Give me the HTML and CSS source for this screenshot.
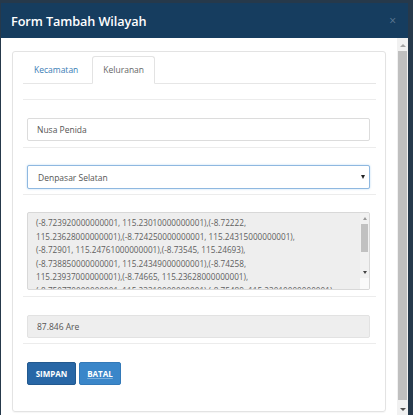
FILE: index.html
```html
<!DOCTYPE html>
<html>
<head>
<meta charset="utf-8">
<link rel="stylesheet" href="styles.css">
</head>
<body>
<div class="modal">
  <div class="modal-header">
    <h4 class="modal-title">Form Tambah Wilayah</h4>
    <span class="close">×</span>
  </div>
  <div class="modal-main">
    <div class="modal-body">
      <div class="panel">
        <ul class="tabs">
          <li class="tab"><a>Kecamatan</a></li>
          <li class="tab active"><a>Keluranan</a></li>
        </ul>
        <div class="sep"></div>
        <div class="group">
          <input class="field" type="text" value="Nusa Penida">
        </div>
        <div class="group group-tight">
          <div class="field select"><span>Denpasar Selatan</span><span class="caret"></span></div>
        </div>
        <div class="group group-ta">
          <div class="ta-box">
            <textarea class="ta" wrap="off" readonly>(-8.723920000000001, 115.23010000000001),(-8.72222,
115.23628000000001),(-8.724250000000001, 115.24315000000001),
(-8.72901, 115.24761000000001),(-8.73545, 115.24693),
(-8.738850000000001, 115.24349000000001),(-8.74258,
115.23937000000001),(-8.74665, 115.23628000000001),
(-8.750770000000001, 115.23319000000001),(-8.75489, 115.23010000000001)</textarea>
            <div class="ta-scroll">
              <div class="arr up"></div>
              <div class="thumb"></div>
              <div class="track"></div>
              <div class="arr down"></div>
              <div class="grip"></div>
            </div>
          </div>
        </div>
        <div class="group group-area">
          <input class="field readonly" type="text" value="87.846 Are" readonly>
        </div>
        <div class="actions">
          <button class="btn btn-save">SIMPAN</button>
          <button class="btn btn-cancel">BATAL</button>
        </div>
      </div>
    </div>
    <div class="scrollbar">
      <div class="sb-arr sb-up"></div>
      <div class="sb-thumb"></div>
      <div class="sb-arr sb-down"></div>
    </div>
  </div>
</div>
</body>
</html>
```
FILE: styles.css
```css
html, body {
  margin: 0;
  padding: 0;
  height: 100%;
  overflow: hidden;
}
body {
  background: #26394b;
  font-family: "Open Sans", "Liberation Sans", sans-serif;
  font-size: 8.5px;
  color: #555;
}
.modal {
  margin: 3px 0 0 1px;
  width: 407px;
  height: 412px;
  display: flex;
  flex-direction: column;
  background: #fff;
}
.modal-header {
  height: 35px;
  flex: none;
  background: #163d5f;
  display: flex;
  align-items: center;
  justify-content: space-between;
  padding: 0 12px 0 10px;
}
.modal-title {
  margin: 0;
  color: #fff;
  font-weight: 600;
  font-size: 12.7px;
  letter-spacing: -0.1px;
}
.close {
  color: #5d7a93;
  font-size: 12px;
}
.modal-main {
  flex: 1;
  display: flex;
  min-height: 0;
}
.modal-body {
  flex: 1;
  padding: 13px 11px 0 11px;
  overflow: hidden;
}
.panel {
  border: 1px solid #e3e3e3;
  border-radius: 3px;
  padding: 4px 9px 26px 10px;
  box-shadow: 0 1px 1px rgba(0,0,0,0.04);
}
.tabs {
  list-style: none;
  margin: 0;
  padding: 0;
  display: flex;
  border-bottom: 1px solid #e6e6e6;
  height: 27px;
}
.tab {
  margin-right: 3px;
  margin-bottom: -1px;
}
.tab a {
  display: block;
  height: 26px;
  line-height: 26px;
  padding: 0 10px;
  color: #3a7db5;
  border: 1px solid transparent;
  border-radius: 3px 3px 0 0;
}
.tab.active a {
  color: #666;
  border-color: #e3e3e3 #e3e3e3 #fff;
  background: #fff;
  padding: 0 10px;
}
.sep {
  height: 15px;
  border-bottom: 1px solid #ececec;
}
.group {
  padding: 18px 6px 6px 4px;
  border-bottom: 1px solid #ececec;
}
.group-tight {
  padding-top: 17px;
  padding-bottom: 5px;
}
.group-ta {
  padding-top: 17px;
}
.group-area {
  padding-bottom: 5px;
}
.field {
  display: block;
  box-sizing: border-box;
  width: 100%;
  height: 23px;
  border: 1px solid #dcdcdc;
  border-radius: 2px;
  padding: 0 9px;
  font-family: "Open Sans", "Liberation Sans", sans-serif;
  font-size: 8.5px;
  color: #555;
  background: #fff;
  outline: none;
}
.select {
  height: 24px;
  display: flex;
  align-items: center;
  justify-content: space-between;
  border-color: #8fb8e0;
  box-shadow: 0 0 2px rgba(102,175,233,0.5);
  padding: 0 4px 0 10px;
}
.caret {
  width: 0;
  height: 0;
  border-left: 2.5px solid transparent;
  border-right: 2.5px solid transparent;
  border-top: 4px solid #222;
}
.ta-box {
  display: flex;
  height: 78px;
  box-sizing: border-box;
  border: 1px solid #d8d8d8;
  border-radius: 2px;
  background: #eee;
  overflow: hidden;
}
.ta {
  flex: 1;
  min-width: 0;
  border: none;
  background: transparent;
  resize: none;
  overflow: hidden;
  padding: 3px 0 0 8px;
  margin: 0;
  font-family: "Open Sans", "Liberation Sans", sans-serif;
  font-size: 8.2px;
  line-height: 13.5px;
  color: #5e5e5e;
  outline: none;
}
.ta-scroll {
  width: 9px;
  flex: none;
  display: flex;
  flex-direction: column;
  align-items: center;
  background: #f1f1f1;
}
.arr {
  width: 0;
  height: 0;
  border-left: 2px solid transparent;
  border-right: 2px solid transparent;
  margin: 4px 0;
}
.arr.up { border-bottom: 3px solid #999; }
.arr.down { border-top: 3px solid #444; }
.thumb {
  width: 7px;
  height: 28px;
  background: #c1c1c1;
}
.track { flex: 1; }
.grip {
  width: 9px;
  height: 11px;
  background: #fafafa;
}
.readonly {
  background: #eee;
  border-color: #e2e2e2;
}
.actions {
  margin-top: 18px;
  display: flex;
  gap: 3px;
  padding-left: 4px;
}
.btn {
  height: 23px;
  border: 1px solid transparent;
  border-radius: 2px;
  color: #fff;
  font-family: "Open Sans", "Liberation Sans", sans-serif;
  font-weight: 700;
  font-size: 8px;
  padding: 0;
  cursor: pointer;
}
.btn-save {
  background: #2867a6;
  border-color: #22598f;
  width: 49px;
}
.btn-cancel {
  background: #3a86c9;
  border-color: #3379b8;
  width: 42px;
  text-decoration: underline;
  text-decoration-color: rgba(255,255,255,0.35);
}
.scrollbar {
  width: 11px;
  flex: none;
  background: #f1f1f1;
  display: flex;
  flex-direction: column;
  align-items: center;
}
.sb-arr {
  width: 0;
  height: 0;
  border-left: 3px solid transparent;
  border-right: 3px solid transparent;
}
.sb-up {
  margin: 6px 0 4px;
  border-bottom: 3px solid #a3a3a3;
}
.sb-thumb {
  width: 9px;
  flex: 1;
  background: #bfbfbf;
}
.sb-down {
  margin: 8px 0 4px;
  border-top: 3px solid #505050;
}
```
